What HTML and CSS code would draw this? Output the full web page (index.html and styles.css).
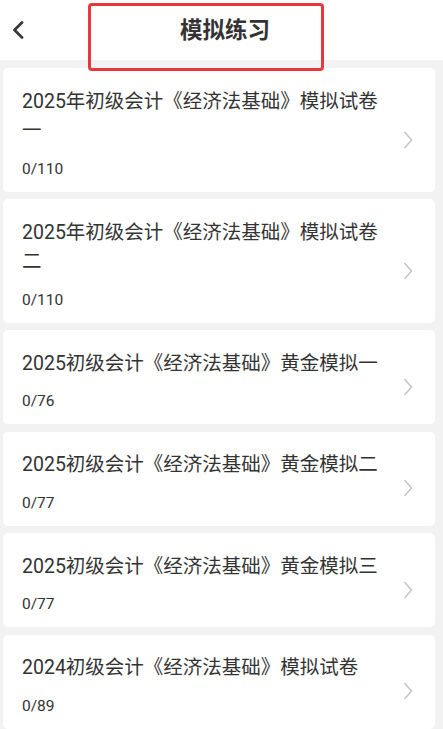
FILE: index.html
```html
<!DOCTYPE html>
<html lang="zh-CN">
<head>
<meta charset="utf-8">
<title>模拟练习</title>
<link rel="stylesheet" href="styles.css">
</head>
<body>
<header class="topbar">
  <div class="back">
    <svg width="12" height="18" viewBox="0 0 12 18"><polyline points="10,1.5 2.5,9 10,16.5" fill="none" stroke="#3a3a3a" stroke-width="2.8" stroke-linecap="round" stroke-linejoin="round"/></svg>
  </div>
  <h1 class="title">模拟练习</h1>
  <div class="spacer"></div>
  <div class="highlight"></div>
</header>
<main class="list">
  <div class="card">
    <div class="info">
      <div class="name">2025年初级会计《经济法基础》模拟试卷一</div>
      <div class="count">0/110</div>
    </div>
    <svg class="chev" width="10" height="18" viewBox="0 0 10 18"><polyline points="1.5,1 8.5,9 1.5,17" fill="none" stroke="#c4c4c4" stroke-width="1.5"/></svg>
  </div>
  <div class="card">
    <div class="info">
      <div class="name">2025年初级会计《经济法基础》模拟试卷二</div>
      <div class="count">0/110</div>
    </div>
    <svg class="chev" width="10" height="18" viewBox="0 0 10 18"><polyline points="1.5,1 8.5,9 1.5,17" fill="none" stroke="#c4c4c4" stroke-width="1.5"/></svg>
  </div>
  <div class="card">
    <div class="info">
      <div class="name">2025初级会计《经济法基础》黄金模拟一</div>
      <div class="count">0/76</div>
    </div>
    <svg class="chev" width="10" height="18" viewBox="0 0 10 18"><polyline points="1.5,1 8.5,9 1.5,17" fill="none" stroke="#c4c4c4" stroke-width="1.5"/></svg>
  </div>
  <div class="card">
    <div class="info">
      <div class="name">2025初级会计《经济法基础》黄金模拟二</div>
      <div class="count">0/77</div>
    </div>
    <svg class="chev" width="10" height="18" viewBox="0 0 10 18"><polyline points="1.5,1 8.5,9 1.5,17" fill="none" stroke="#c4c4c4" stroke-width="1.5"/></svg>
  </div>
  <div class="card">
    <div class="info">
      <div class="name">2025初级会计《经济法基础》黄金模拟三</div>
      <div class="count">0/77</div>
    </div>
    <svg class="chev" width="10" height="18" viewBox="0 0 10 18"><polyline points="1.5,1 8.5,9 1.5,17" fill="none" stroke="#c4c4c4" stroke-width="1.5"/></svg>
  </div>
  <div class="card">
    <div class="info">
      <div class="name">2024初级会计《经济法基础》模拟试卷</div>
      <div class="count">0/89</div>
    </div>
    <svg class="chev" width="10" height="18" viewBox="0 0 10 18"><polyline points="1.5,1 8.5,9 1.5,17" fill="none" stroke="#c4c4c4" stroke-width="1.5"/></svg>
  </div>
</main>
</body>
</html>
```
FILE: styles.css
```css
* { box-sizing: border-box; }
html, body {
  margin: 0;
  padding: 0;
}
body {
  background: #f2f2f2;
  font-family: Roboto, "Noto Sans CJK SC", "Noto Sans", sans-serif;
  color: #333;
  width: 443px;
  height: 729px;
  overflow: hidden;
}
.topbar {
  position: relative;
  height: 60px;
  background: #fff;
  display: grid;
  grid-template-columns: 1fr auto 1fr;
  align-items: center;
}
.back {
  padding-left: 12px;
  display: flex;
  align-items: center;
  height: 60px;
}
.back svg { display: block; }
.title {
  margin: 0;
  padding-left: 7px;
  font-size: 22.5px;
  font-weight: 700;
  color: #333;
  line-height: 1;
}
.highlight {
  position: absolute;
  left: 88px;
  top: 3px;
  width: 236px;
  height: 68px;
  border: 3px solid #e8383d;
  border-radius: 4px;
  z-index: 2;
}
.list {
  display: flex;
  flex-direction: column;
  gap: 7.5px;
  padding: 8px 8px 0 3px;
}
.card {
  background: #fff;
  border-radius: 5px;
  display: flex;
  align-items: center;
  padding: 18.5px 22px 13px 19px;
}
.info {
  flex: 1;
  min-width: 0;
  padding-right: 10px;
}
.name {
  font-size: 19.5px;
  line-height: 29.5px;
  color: #333;
}
.count {
  margin-top: 13px;
  font-size: 15.5px;
  line-height: 20px;
  color: #333;
}
.chev {
  display: block;
  flex: none;
  margin-top: 14px;
}
```
